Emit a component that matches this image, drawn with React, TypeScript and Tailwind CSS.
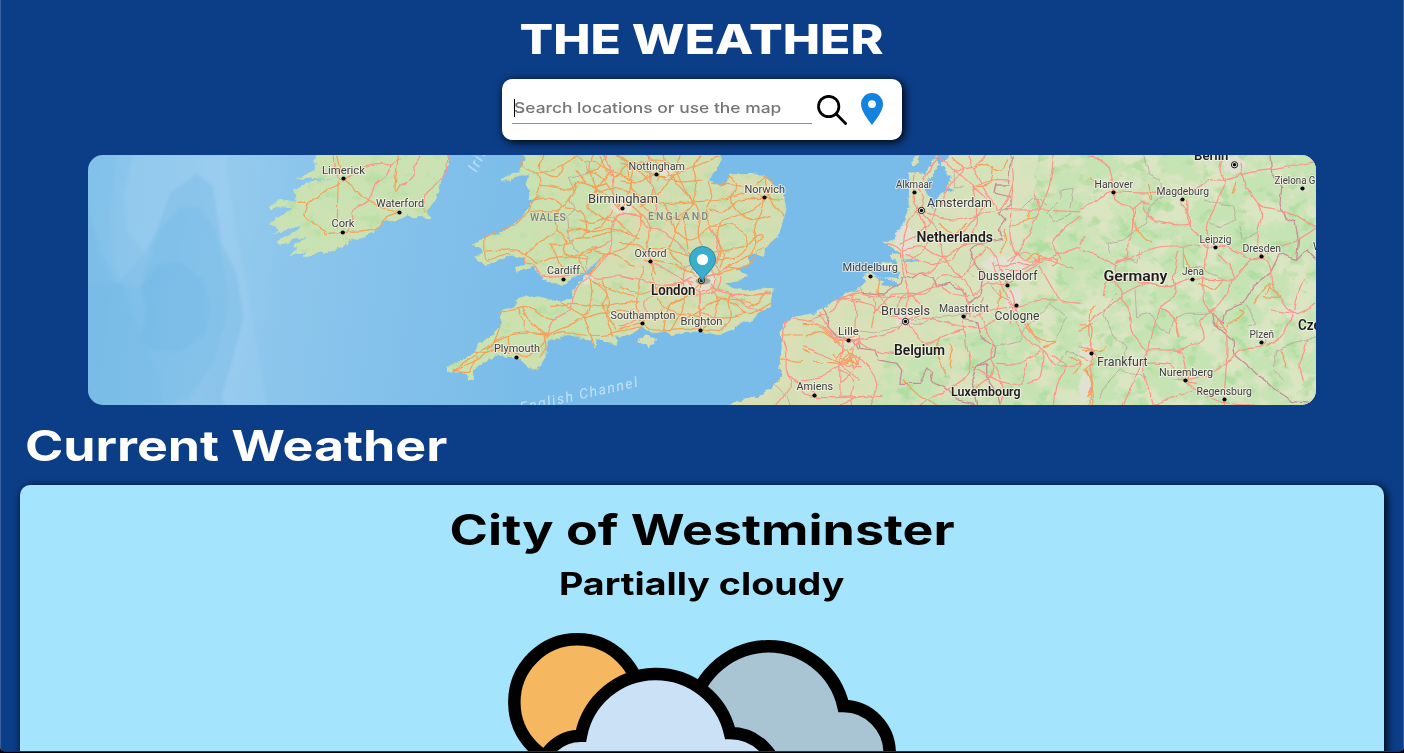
import React from 'react';

/** Map tiles are digitised at 3x; every list is local to a tile whose left edge is `ox`. */
const place = (ox: number, pts: string) =>
  pts
    .trim()
    .split(/\s+/)
    .map((p) => {
      const [x, y] = p.split(',').map(Number);
      return `${(ox + x / 3).toFixed(1)},${(150 + y / 3).toFixed(1)}`;
    })
    .join(' ');

const smooth = (ox: number, pts: string) => {
  const p = place(ox, pts).split(' ').map((s) => s.split(',').map(Number));
  let d = `M${p[0][0]},${p[0][1]}`;
  for (let i = 0; i < p.length - 1; i++) {
    const a = p[Math.max(0, i - 1)];
    const b = p[i];
    const c = p[i + 1];
    const e = p[Math.min(p.length - 1, i + 2)];
    d += `C${b[0] + (c[0] - a[0]) / 6},${b[1] + (c[1] - a[1]) / 6} ${c[0] - (e[0] - b[0]) / 6},${c[1] - (e[1] - b[1]) / 6} ${c[0]},${c[1]}`;
  }
  return d;
};

const ireland =
  place(80, '712,5 700,35 715,40 700,60 680,72 645,90 690,82 720,88 770,86 720,92 675,95 665,110 638,122 650,135 645,150 655,155 625,152 600,147 570,165 570,175 600,172 640,175 620,185 610,195 590,205 568,220 590,235 600,240 575,250 605,245 640,230 662,230 650,240 625,255 600,270 592,284 620,280 640,265 685,262 660,275 640,285 650,296 625,318 650,310 680,305 670,320 700,318 720,305 745,310 770,295 805,285 800,268 830,270 850,260 890,240 910,215 940,210 960,210 980,195') +
  ' ' +
  place(400, '40,205 60,195 85,208 95,205 80,185 105,150 118,115 130,75 145,40 145,5');

const britain =
  place(400, '350,5 375,20 362,50 355,65 330,72 305,90 330,92 350,80 385,75 380,100 390,125 385,150 405,148 380,180 350,220 315,240 290,250 255,262 217,285 245,295 250,305 225,320 255,345 290,335 330,315 370,325 375,340 345,355 350,365 380,358 400,350 420,375 430,390 455,400 490,405 520,380 555,370 575,350 600,325 570,375 535,400 520,420 515,445 480,455 455,450 420,440 385,438 350,448 350,465 335,475 305,482 300,530 270,565 235,580 225,605 200,625 138,650 138,672 185,665 200,675 205,692 220,685 215,665 240,645 265,630 290,615 320,620 350,622 385,655 415,655 435,620 440,575 470,565 505,555 550,565 578,575 585,595 590,570 620,575 650,585 650,570 640,560') +
  ' ' +
  place(620, '0,560 40,550 65,530 100,548 140,545 155,555 200,545 240,545 300,555 330,540 370,515 395,515 410,490 450,470 455,440 458,415 430,415 400,425 340,415 310,400 350,395 385,375 345,360 390,340 380,320 400,310 430,320 435,295 470,260 482,235 499,180 493,140 462,105 435,80 400,72 330,72 320,105 300,110 265,90 285,60 305,30 300,5');

const wight = place(620, '46,570 85,555 112,570 87,592 65,580');

const continent =
  place(620, '310,775 380,745 415,740 470,700 490,675 478,655 485,590 482,545 487,525 520,500 580,490 610,475 660,445') +
  ' ' +
  place(840, '0,440 60,410 80,398 70,375 95,368 120,380 180,385 175,365 120,350 130,335 175,345 150,315 185,312 130,275 160,270 190,230 205,170 210,68 235,65 255,75 265,55 300,0 720,0') +
  ' ' +
  place(1080, '740,0 740,780');

const waters = [
  place(840, '275,80 300,35 315,55 332,85 322,112 345,118 300,130 290,155 278,180 270,155 255,105'),
  place(840, '130,395 95,375 140,385 175,400 170,410 120,405'),
  place(840, '185,330 230,325 240,332 200,338'),
  place(840, '290,15 330,15 310,35 295,40'),
];

const texel = place(840, '215,48 214,35 235,12 240,30 226,48');

const east = place(400, '560,0 600,100 640,260 570,360 640,480 660,600 1200,600 1200,0');

const orange: [number, string][] = [
  [80, '655,157 680,160 672,195 700,220 735,240 740,250 790,247 850,245 890,235 920,205 960,188'],
  [80, '775,95 773,150 772,235'], [80, '680,165 710,140 745,120 790,95'], [80, '795,90 830,120 865,150 890,165 960,190'],
  [80, '770,15 780,70 760,50'], [80, '955,15 945,120 960,105'],
  [400, '255,262 258,330 300,320 330,310'], [400, '255,262 300,240 345,225 380,190 400,150 420,140'],
  [400, '258,303 350,300 375,310 420,275 470,240 465,200 480,180'], [400, '365,15 370,50 410,70 420,105 410,140 390,160'],
  [400, '410,70 460,60 500,40 530,15'], [400, '425,15 420,60 470,80 490,50'], [400, '420,105 460,110 510,120 540,95 580,110 620,100'],
  [400, '400,150 450,145 490,170 530,180 550,190 560,240 545,260'], [400, '390,180 430,185 480,180 520,130 530,100'],
  [400, '470,240 500,270 490,300 520,320 560,310 600,290'], [400, '455,285 470,320 480,345 500,375'], [400, '375,310 410,340 450,325 500,320 560,330'],
  [400, '450,285 490,285 530,265 575,262 640,240'], [400, '500,245 540,235 580,245 640,235 700,260'], [400, '350,475 370,510 380,545 440,555'],
  [400, '300,487 340,480 370,472 400,480 430,500 460,510'], [400, '365,475 390,510 420,540 440,555'], [400, '160,660 210,625 250,600 300,565 360,550 440,550'],
  [400, '165,660 230,630 280,600 350,610 380,620 420,590 440,555'], [400, '220,605 260,610 290,590 325,585'], [400, '160,655 200,665 215,650 230,620'],
  [400, '300,520 290,560 260,600'], [400, '325,560 328,610'], [400, '430,555 435,600 420,620'], [400, '440,555 490,535 550,505 600,490 700,480'],
  [400, '440,560 490,545 550,555 620,555 680,540 720,530'], [400, '455,470 520,460 600,470 650,460 720,455'], [400, '480,455 520,480 550,500 570,550 583,590'],
  [400, '570,385 575,430 565,480 550,500'], [400, '570,385 620,430 610,470 650,540'], [400, '610,390 625,450 620,500 640,560'], [400, '575,390 640,420 700,440'],
  [400, '570,370 620,310 650,315 700,350'], [400, '560,370 540,330 560,300 620,310 660,300'], [400, '580,15 570,60 590,130 560,170 600,200 640,215'],
  [400, '540,30 590,40 640,65 700,90'], [400, '560,60 600,80 640,130 660,170'], [400, '530,60 560,100 610,130 660,180'], [400, '590,130 640,115 700,130'],
  [400, '600,20 640,80 680,50 720,60'], [400, '620,20 590,60 560,70'], [400, '640,15 680,40 690,120 665,180'], [400, '540,210 580,220 620,205 680,190'],
  [400, '640,60 600,100 570,150'], [400, '640,180 600,230 560,245'], [400, '640,200 680,240 720,270'],
  [620, '0,40 60,60 130,80 200,60 270,30 300,20'], [620, '0,90 60,95 100,75 170,95 250,90'], [620, '10,20 40,60 30,110 80,150 130,160 220,155 300,150 370,130 435,80'],
  [620, '130,15 140,60 170,100 220,155 240,200 235,260 260,310'], [620, '180,15 170,60 190,110 215,150'], [620, '240,15 220,60 230,110 215,160 190,200 165,240'],
  [620, '40,120 70,170 120,200 170,205 220,160'], [620, '60,170 110,140 140,100 180,60'], [620, '0,150 50,180 90,230 80,290 90,330 110,370'], [620, '60,190 60,240 20,290 0,300'],
  [620, '265,95 275,140 260,180 275,230 330,222 370,250 380,290 345,325 290,325'], [620, '275,100 340,105 390,115 435,145 490,150'], [620, '325,75 350,105 335,150 360,190 400,210 450,200'],
  [620, '435,80 445,140 475,180 490,200'], [620, '435,145 400,180 340,200 300,215 270,235'], [620, '435,145 420,200 400,240 410,280 380,320 320,350'], [620, '435,145 460,100 430,80'],
  [620, '270,180 310,185 360,150 435,145'], [620, '270,235 300,290 290,340'], [620, '410,280 430,260 410,260 380,290'], [620, '320,350 360,355 385,345 410,310 430,290'],
  [620, '190,200 200,270 210,320 240,350'], [620, '130,160 165,240 150,300 190,350 230,380'], [620, '165,240 210,270 270,235'], [620, '80,290 150,300 200,320 270,310'],
  [620, '90,330 60,290 0,280'], [620, '100,330 150,340 200,360'], [620, '70,350 60,400 50,450 60,510'], [620, '0,410 50,430 95,420 140,410 190,400'],
  [620, '100,340 100,400 130,470 180,490 240,500'], [620, '130,540 150,470 210,430 240,400'], [620, '0,540 60,520 100,540 200,535 245,540 300,545'],
  [620, '240,540 240,430 245,390'], [620, '60,520 110,490 180,450 220,420'], [620, '245,540 280,500 290,440 270,410'], [620, '290,440 340,460 380,490 410,480 450,460'],
  [620, '300,545 330,500 325,450 350,430 400,435 450,430'], [620, '380,490 330,500 280,500 240,490'], [620, '390,470 420,450 440,420'], [620, '250,380 300,370 345,355'],
  [620, '260,310 320,300 370,290'], [620, '300,215 290,260 310,310 300,350'], [620, '150,510 200,505 260,470 310,445 400,460'], [620, '190,420 190,480 150,540'],
  [620, '0,20 50,40 110,30 160,45'], [620, '50,60 100,110 90,160'], [620, '80,15 120,50 110,90'],
  [620, '485,555 550,555'], [620, '480,620 520,635 550,635'], [620, '550,600 570,610'], [620, '580,630 610,640'], [620, '560,560 600,545 630,560 660,580'], [620, '550,520 600,530 650,570 700,560'],
  [620, '640,610 660,640 700,625'], [620, '620,640 680,640 700,600'], [620, '650,620 680,600 700,650'],
  [840, '100,440 105,480 95,530'], [840, '120,390 115,430 140,470'], [840, '330,580 335,610 330,650'], [840, '300,560 290,600 320,680'], [840, '190,690 230,730 290,765'], [840, '0,620 50,640 30,610 0,640'],
  [840, '460,50 450,100 410,110'], [840, '480,310 500,270 490,240'], [840, '300,220 340,250 380,220'], [840, '570,180 560,210'], [840, '600,320 650,330 640,350'], [840, '560,520 600,570 650,575 610,590'],
  [840, '510,230 550,215 590,200'], [840, '480,420 475,470 460,500'], [840, '690,620 720,640 700,670'], [840, '560,330 590,310 600,340'], [840, '400,60 430,40 480,60 500,30'],
  [1080, '165,170 165,220 190,265 215,275'], [1080, '440,540 410,520 430,500'], [1080, '520,460 540,430 570,400 560,430'], [1080, '570,410 600,440 550,440'], [1080, '30,590 40,540 25,500 45,460'],
  [1080, '10,600 60,605 75,590'], [1080, '0,540 40,520'], [1080, '0,620 40,640 20,660 35,700 20,740'], [1080, '15,660 30,690 40,765'], [1080, '205,100 215,150 200,130'], [1080, '290,500 295,560'],
  [1080, '600,600 620,650'], [1080, '360,400 400,420 430,390'], [1080, '440,530 490,490 480,480'], [1080, '280,690 320,690 330,660'], [1080, '470,100 460,130'], [1080, '30,80 60,110'], [1080, '310,310 330,360'],
];

const red: [number, string][] = [
  [80, '760,15 765,60 790,90 850,50 900,40 930,45 960,25'], [80, '930,45 920,75 885,105 865,150 820,180 818,210 805,245'],
  [400, '0,105 30,90 45,70 45,45 60,15'], [400, '145,15 135,75 110,100 75,135 75,185'],
  [400, '420,375 400,345 375,338 375,320'], [400, '420,378 480,380 530,370 570,375 600,385 660,378 700,390'], [400, '570,375 630,300 635,230 660,190 720,200'], [400, '570,380 540,400 520,440 510,480 460,510 440,555'],
  [400, '610,15 635,60 640,120 655,170'], [400, '575,295 600,290 635,270'],
  [620, '0,380 60,390 110,405 180,400 215,385'], [620, '0,190 50,195 80,230 140,250 190,300 215,340 230,370'], [620, '90,15 90,90 110,130 105,190'], [620, '75,330 140,360 190,390 220,400'],
  [620, '270,235 290,275 290,330 260,375'], [620, '80,490 75,455 110,430 180,415'], [620, '195,350 250,330 295,355 300,400 270,430 210,435 190,400 195,350'], [620, '210,360 250,350 280,370 280,410 240,425 205,400'],
  [620, '270,400 310,430 350,430 400,435 450,425'],
  [620, '270,410 330,430 380,470 430,480'], [620, '240,430 240,530'], [620, '0,530 50,510 80,500'], [620, '320,350 290,370 260,380'],
  [620, '500,515 485,545 500,600 500,665 540,700 570,740 720,740'], [620, '490,520 520,507 570,510 640,480 660,445 720,420'], [620, '570,510 610,530 640,560 670,570 710,575'], [620, '670,570 660,640 660,740'],
  [620, '600,490 640,560 670,600'], [620, '550,590 600,610 660,640 720,650'], [620, '540,690 600,680 660,650'], [620, '660,640 720,690'], [620, '470,765 510,710 500,665'], [620, '590,740 560,710 520,690'], [620, '660,700 700,660 720,620'], [620, '640,450 690,445 720,450'],
  [840, '0,445 50,430 100,440 200,440 290,410 330,430 390,440'], [840, '35,430 50,480 45,530 60,570 30,600'], [840, '0,450 80,460 130,490 190,510'], [840, '30,575 100,560 170,540 195,515 270,505 330,520 370,530 430,530 500,490'],
  [840, '195,515 205,430 190,370 180,300 140,280'], [840, '190,510 230,550 260,580 330,550 370,540 380,590 390,640 370,690 300,730 240,765'], [840, '100,490 150,440 200,430 250,480 200,510'], [840, '50,570 100,600 170,610 250,590'],
  [840, '0,640 40,620 75,640 110,700 90,765'], [840, '0,660 40,690 30,765'], [840, '170,500 180,450 200,430 260,430 300,380 370,380'], [840, '225,70 220,150 230,180 200,230 190,300 200,370'],
  [840, '240,180 250,140 230,110'], [840, '245,180 290,200 340,210 400,200 470,180 540,180 600,180 720,185'], [840, '245,190 300,250 310,320 380,400 400,440'], [840, '190,300 250,290 310,320 380,280 440,290 480,350 500,400'],
  [840, '230,180 260,240 250,300 210,330'], [840, '200,310 270,340 330,330 360,290'], [840, '200,370 260,370 310,320'], [840, '370,380 400,340 440,290'], [840, '180,280 240,250 280,200 290,150'],
  [840, '250,90 260,70 300,15'], [840, '300,20 340,60 400,110 410,200'], [840, '340,20 370,60 330,100 310,160'], [840, '345,60 400,50 440,15'], [840, '400,110 460,90 510,90'], [840, '380,20 400,60 440,130 470,180'], [840, '510,15 520,90 500,150 480,180'],
  [840, '300,250 360,250 410,200 400,250 360,290'], [840, '640,15 630,100 600,180 540,300 500,350'], [840, '600,180 580,120'], [840, '520,300 550,330 600,330 660,310 720,290'], [840, '470,350 530,340 580,345 600,320'], [840, '480,360 540,360 590,330'],
  [840, '660,330 640,280 680,230 720,200'], [840, '500,330 560,310 600,340 620,330 700,355'], [840, '400,440 440,400 500,400 550,370 600,340'], [840, '500,400 520,440 530,480 560,530 600,580'], [840, '440,380 470,430 520,470 510,520'],
  [840, '460,340 480,390 500,440 530,470'], [840, '600,350 640,420 660,450 720,460'], [840, '530,470 600,450 650,450'], [840, '400,500 450,480 530,470'], [840, '370,500 370,540'], [840, '430,530 460,580 450,620 470,660 490,720 480,765'], [840, '430,440 420,480 440,540'],
  [840, '520,500 560,570 610,600 650,650 720,640'], [840, '610,600 600,680 560,700'], [840, '470,640 540,640 600,600'], [840, '640,620 680,650 650,700 640,765'], [840, '560,640 540,700 470,690 400,650'], [840, '0,765 60,740 130,740'], [840, '400,720 450,680 460,640'],
  [840, '520,90 510,250 530,320'], [840, '350,400 380,440 390,500'], [840, '410,200 440,150 400,110'],
  [1080, '0,175 40,160 80,130 100,125 160,128 300,130 350,115 390,90 440,90 500,70 600,55 708,35'], [1080, '30,15 80,45 95,80 100,125 120,160 155,175 160,240 145,280 140,320 110,340 105,390 125,440 60,490 30,520 34,610 30,765'],
  [1080, '155,175 190,150 195,180 230,215 330,220 300,150'], [1080, '320,150 325,210 360,260 380,290 440,290 510,325 545,320'], [1080, '440,90 410,160 385,220 380,290 375,330 370,450 395,490 440,560 430,765'],
  [1080, '110,340 160,320 240,290 360,290'], [1080, '110,395 180,395 260,410 340,388 460,385 510,330 545,320'], [1080, '240,380 170,410 125,440 150,490 160,550 200,600'], [1080, '295,305 280,390 290,430 240,470 225,520 205,600'],
  [1080, '200,600 260,600 300,605 315,650 315,690'], [1080, '80,650 200,640 270,645 310,690 350,700'], [1080, '315,690 400,670 450,630 480,600 545,590 560,570'], [1080, '200,600 190,650 220,765'], [1080, '180,650 130,765'],
  [1080, '320,700 420,755 520,765'], [1080, '220,765 280,740 340,720'], [1080, '480,40 495,100 540,165 600,180 650,200 708,230'], [1080, '545,320 530,270 545,190 535,160'], [1080, '545,320 590,290 650,270 708,235'],
  [1080, '460,385 440,430 400,480 360,510 370,570 290,600'], [1080, '545,320 570,350 580,410 640,490 708,460'], [1080, '640,490 600,560 560,590'], [1080, '640,490 650,440 670,390'], [1080, '640,490 570,480'], [1080, '0,300 50,315 105,345'], [1080, '0,280 15,260'],
  [1080, '105,395 80,400 70,440'], [1080, '410,310 450,350 465,385'], [1080, '180,150 210,160'], [1080, '0,520 30,530'], [1080, '240,470 280,500 300,560'], [1080, '75,640 30,600 0,590'], [1080, '680,570 660,640 670,690'], [1080, '430,20 420,60 435,90'],
];

const borders: [number, string][] = [
  [400, '530,20 560,40 565,70 530,80 505,85 525,130 510,150 525,180 500,200 505,260 520,295 560,320 560,355'],
  [620, '460,700 500,735 510,765'],
  [840, '180,520 250,520 290,500 390,490'], [840, '60,540 100,545 180,530'], [840, '690,170 700,115 660,120 660,150 620,190 640,215 690,190'], [840, '400,320 380,360 400,380'], [840, '470,590 540,570 560,530 630,460 680,500 650,560'], [840, '650,650 680,600 720,620'],
  [840, '340,60 340,110 370,110'], [840, '540,180 580,140 620,165'],
  [1080, '195,15 205,70 240,90 250,140 210,170 200,220 130,270 80,280 90,310'], [1080, '370,150 400,160 460,165 470,210 420,230 390,220'], [1080, '480,230 490,270 530,250'], [1080, '310,290 310,350 360,350 390,370 440,390'],
  [1080, '130,320 170,340 180,300'], [1080, '165,420 170,500 210,490 240,540 270,550 280,510 320,490 380,490'], [1080, '110,430 70,490 100,560 140,590 130,650'], [1080, '60,745 80,700 120,660 200,680'], [1080, '590,600 580,660 610,690'], [1080, '590,600 650,580 708,560'], [1080, '500,465 530,520 500,530'],
];

const nations: [number, string][] = [
  [620, '610,475 625,500 620,530 650,560 700,570 715,600'], [840, '60,412 65,430 130,435 150,420 180,400 185,380 215,385 240,370 280,385 290,410 330,400 380,430 385,460 420,435 430,370 405,340 390,300 410,280 490,265 475,240 495,210 475,190 515,165 510,140 465,130 470,105 505,105 505,70 520,20'],
  [840, '385,460 375,510 410,515 420,560 465,590 460,620 410,650 395,690 410,765'], [840, '410,650 440,640 440,680 470,720 480,765'],
  [840, '55,570 60,595 105,600 115,630 170,640 185,660 180,700 240,700 260,655 275,665 270,690 330,720 350,750 400,760'],
  [1080, '570,15 575,70 605,110 600,160 615,205 645,215 655,270 650,330 600,310 570,370 520,410 490,460 440,480 430,520 395,490 400,520 460,570 460,610 520,660 580,715 640,755 690,760'],
  [1080, '650,330 680,300 708,330'],
];

type Label = { t: string; x: number; y: number; w: number; s?: number; b?: boolean; dot?: [number, number] };
const labels: Label[] = [
  { t: 'Limerick', x: 322, y: 173.7, w: 43, dot: [343.5, 178.5] },
  { t: 'Waterford', x: 376, y: 207, w: 48, dot: [399.5, 212.5] },
  { t: 'Cork', x: 331.5, y: 227, w: 23, dot: [342.8, 232.5] },
  { t: 'Nottingham', x: 628.5, y: 169.5, w: 56.5, dot: [656.5, 174.5] },
  { t: 'Birmingham', x: 588, y: 202.5, w: 70, s: 13.2, dot: [622.5, 208.5] },
  { t: 'Norwich', x: 744.5, y: 193, w: 40.5, dot: [764.5, 197.5] },
  { t: 'Oxford', x: 634.5, y: 257, w: 32, dot: [650.5, 261.5] },
  { t: 'Cardiff', x: 547, y: 274, w: 33, dot: [563.5, 279.5] },
  { t: 'Southampton', x: 610.5, y: 319, w: 65, dot: [642.5, 323.5] },
  { t: 'Brighton', x: 680.5, y: 325, w: 42, dot: [700.5, 330.5] },
  { t: 'Plymouth', x: 494, y: 352, w: 46, dot: [516.5, 357.5] },
  { t: 'London', x: 651, y: 294.5, w: 44.5, s: 14, b: true },
  { t: 'Lille', x: 838, y: 335, w: 21, dot: [848.5, 340.5] },
  { t: 'Amiens', x: 796.5, y: 390, w: 36.5, dot: [814.5, 395.5] },
  { t: 'Alkmaar', x: 896, y: 188, w: 36, s: 11, dot: [914.5, 192.5] },
  { t: 'Amsterdam', x: 927, y: 206.5, w: 65, s: 13 },
  { t: 'Netherlands', x: 916.5, y: 242, w: 76.5, s: 14, b: true },
  { t: 'Middelburg', x: 842.5, y: 271, w: 55.5, dot: [870.5, 276.5] },
  { t: 'Dusseldorf', x: 978, y: 280, w: 59.5, s: 13, dot: [1007.5, 285.5] },
  { t: 'Brussels', x: 881, y: 315, w: 49, s: 13 },
  { t: 'Maastricht', x: 939, y: 312, w: 50, dot: [963.5, 316.5] },
  { t: 'Cologne', x: 994.5, y: 320, w: 45, s: 13, dot: [1016.5, 305.5] },
  { t: 'Belgium', x: 894, y: 355, w: 51, s: 14, b: true },
  { t: 'Luxembourg', x: 951, y: 396, w: 69.5, s: 13.2, b: true },
  { t: 'Hanover', x: 1094.5, y: 188, w: 38.5, dot: [1113.5, 192.5] },
  { t: 'Magdeburg', x: 1156.5, y: 195, w: 52.5, dot: [1182.5, 199.5] },
  { t: 'Berlin', x: 1194, y: 160.3, w: 34.5, s: 13.5, b: true },
  { t: 'Zielona G', x: 1274.5, y: 184, w: 41, s: 11.4, dot: [1302.5, 188.5] },
  { t: 'Leipzig', x: 1199.5, y: 242.5, w: 32, dot: [1215.5, 247.5] },
  { t: 'Dresden', x: 1242.5, y: 252, w: 38.5, dot: [1261.5, 256.5] },
  { t: 'Jena', x: 1182, y: 275, w: 22, dot: [1192.5, 279.5] },
  { t: 'Germany', x: 1103.5, y: 281, w: 64, s: 15.5, b: true },
  { t: 'Plzeň', x: 1249.5, y: 337.5, w: 24.5, dot: [1261.5, 342.5] },
  { t: 'Frankfurt', x: 1097, y: 366, w: 50.5, s: 13, dot: [1091.5, 353.5] },
  { t: 'Nuremberg', x: 1159, y: 376, w: 54, dot: [1185.5, 380.5] },
  { t: 'Regensburg', x: 1196.5, y: 395, w: 55.5, dot: [1224.5, 399.5] },
  { t: 'Czechia', x: 1298, y: 329.5, w: 48, s: 14, b: true },
  { t: 'Wrocław', x: 1313, y: 250, w: 42 },
];

const capitals: [number, number][] = [[701.5, 280.5], [921.5, 210.5], [905.5, 321.5], [1234.5, 164.8]];

function WeatherMap() {
  return (
    <svg viewBox="88 155 1228 250" className="block h-full w-full" fontFamily="Roboto, 'Noto Sans', sans-serif">
      <defs>
        <linearGradient id="sea" x1="88" x2="560" y1="0" y2="60" gradientUnits="userSpaceOnUse">
          <stop offset="0" stopColor="#84c2ea" />
          <stop offset=".33" stopColor="#95caed" />
          <stop offset=".5" stopColor="#8bc5ec" />
          <stop offset="1" stopColor="#7abce9" />
        </linearGradient>
        <linearGradient id="mainland" x1="780" x2="1120" y1="0" y2="0" gradientUnits="userSpaceOnUse">
          <stop offset="0" stopColor="#dadfb5" />
          <stop offset="1" stopColor="#dae5c2" />
        </linearGradient>
        <filter id="soft" x="-5%" y="-5%" width="110%" height="110%">
          <feGaussianBlur stdDeviation="1.5" />
        </filter>
        <filter id="rough" x="-5%" y="-5%" width="110%" height="110%">
          <feTurbulence type="fractalNoise" baseFrequency=".16" numOctaves="3" seed="4" />
          <feDisplacementMap in="SourceGraphic" scale="6" xChannelSelector="R" yChannelSelector="G" />
        </filter>
        <filter id="wander" x="-5%" y="-5%" width="110%" height="110%">
          <feTurbulence type="fractalNoise" baseFrequency=".08" numOctaves="2" seed="9" />
          <feDisplacementMap in="SourceGraphic" scale="5" xChannelSelector="R" yChannelSelector="G" />
        </filter>
        <filter id="woods" x="0" y="0" width="100%" height="100%" colorInterpolationFilters="sRGB">
          <feTurbulence type="fractalNoise" baseFrequency=".06 .075" numOctaves="4" seed="21" />
          <feColorMatrix values="0 0 0 0 .65  0 0 0 0 .86  0 0 0 0 .59  6 0 0 0 -3.5" />
          <feComposite in2="SourceGraphic" operator="in" />
        </filter>
        <filter id="lightwoods" x="0" y="0" width="100%" height="100%" colorInterpolationFilters="sRGB">
          <feTurbulence type="fractalNoise" baseFrequency=".035 .04" numOctaves="4" seed="6" />
          <feColorMatrix values="0 0 0 0 .77  0 0 0 0 .89  0 0 0 0 .7  6 0 0 0 -2.4" />
          <feComposite in2="SourceGraphic" operator="in" />
        </filter>
        <clipPath id="hills">
          <path d="M870 400L890 350 985 330 1020 240 1040 150H1320V410H870Z" />
        </clipPath>
        <clipPath id="british"><polygon points={britain} /></clipPath>
      </defs>
      <rect x="88" y="155" width="1228" height="250" fill="url(#sea)" />
      <g fillOpacity=".16" filter="url(#soft)">
        <polygon fill="#b4dcf6" points={place(80, '160,15 130,130 140,240 195,308 235,230 270,130 350,70 400,110 425,280 470,370 490,500 465,600 425,740 440,765 560,765 500,400 470,250 440,60 440,15')} />
        <polygon fill="#5fafdf" points={place(80, '15,140 60,300 110,400 180,420 240,240 300,175 360,170 410,250 440,400 440,500 400,640 330,740 260,765 15,765')} />
        <polygon fill="#5fafdf" points={place(80, '180,410 230,345 300,335 370,390 390,460 380,550 300,605 215,600 180,570 200,480')} />
        <polygon fill="#5fafdf" points={place(80, '195,308 235,230 270,130 350,70 400,110 425,280 470,370 490,500 465,600 425,740 440,790 0,790 0,400 110,400')} />
        <polygon fill="#6ab5e2" points={place(80, '0,0 110,15 90,200 100,320 150,480 240,680 250,790 0,790')} />
      </g>
      <g filter="url(#rough)">
        <polygon points={ireland} fill="#cde2b3" />
        <polygon points={britain} fill="#cfe0af" />
        <polygon points={wight} fill="#d6dfb1" />
        <polygon points={continent} fill="url(#mainland)" />
        <polygon points={texel} fill="#d6dfb1" />
      </g>
      <polygon points={east} fill="#dadcb1" clipPath="url(#british)" opacity=".8" />
      <g filter="url(#lightwoods)" opacity=".45">
        <polygon points={ireland} /><polygon points={britain} />
      </g>
      <g filter="url(#lightwoods)" opacity=".25"><polygon points={continent} /></g>
      <g clipPath="url(#hills)">
        <g filter="url(#lightwoods)" opacity=".9"><polygon points={continent} /></g>
      </g>
      <g filter="url(#woods)" opacity=".4"><polygon points={britain} /><polygon points={ireland} /></g>
      <g clipPath="url(#hills)"><g filter="url(#woods)" opacity=".65"><polygon points={continent} /></g></g>
      <g fill="#e5e2d8" opacity=".8">
        {[[701, 281, 16, 10], [1007, 264, 26, 8], [1014, 300, 8, 14], [622, 206, 11, 9], [905, 321, 9, 7], [1234, 165, 11, 9], [1087, 355, 8, 10], [1085, 388, 6, 14], [905, 240, 10, 14], [849, 340, 9, 5], [1292, 313, 6, 6], [665, 170, 6, 9], [588, 279, 5, 5]].map(([x, y, rx, ry], i) => (
          <ellipse key={i} cx={x} cy={y} rx={rx} ry={ry} filter="url(#rough)" />
        ))}
      </g>
      <g fill="#7abce9" filter="url(#rough)">{waters.map((p, i) => <polygon key={i} points={p} />)}</g>
      <g fill="none" strokeLinecap="round" filter="url(#wander)">
        <g stroke="#b5a49b" strokeWidth=".9" opacity=".85">{borders.map(([o, p], i) => <polyline key={i} points={place(o, p)} />)}</g>
        <g stroke="#c78d95" strokeWidth="1.3">{nations.map(([o, p], i) => <polyline key={i} points={place(o, p)} />)}</g>
        <g stroke="#f2a057" strokeWidth="1.2">{orange.map(([o, p], i) => <path key={i} d={smooth(o, p)} />)}</g>
        <g stroke="#fa9587" strokeWidth="1.2">{red.map(([o, p], i) => <path key={i} d={smooth(o, p)} />)}</g>
      </g>
      <g fill="#85877e" fontSize="10.5" fontWeight="600" stroke="#eeeed8" strokeOpacity=".7" strokeWidth="1.2" paintOrder="stroke">
        <text x="530" y="220.5" textLength="36">WALES</text>
        <text x="648" y="220" textLength="60">ENGLAND</text>
      </g>
      <g fill="#c4e2f6" fontSize="14" fontStyle="italic">
        <text transform="translate(521 412.5) rotate(-12.5)" textLength="120">English Channel</text>
        <text transform="translate(476.5 173) rotate(-63)" letterSpacing="2">Irish Sea</text>
      </g>
      {labels.map((l) => (
        <g key={l.t}>
          <text x={l.x} y={l.y} fontSize={l.s ?? 11.8} fontWeight={l.b ? 600 : 400} textLength={l.w} lengthAdjust="spacingAndGlyphs" fill={l.b ? '#1d1d20' : '#3c3d41'} stroke="#f6f4ea" strokeOpacity=".75" strokeWidth="2.2" strokeLinejoin="round" paintOrder="stroke">{l.t}</text>
          {l.dot && <circle cx={l.dot[0]} cy={l.dot[1]} r="2.1" fill="#050505" />}
        </g>
      ))}
      {capitals.map(([x, y]) => (
        <g key={x}>
          <circle cx={x} cy={y} r="3.1" fill="#fff" stroke="#111" />
          <circle cx={x} cy={y} r="1.8" fill="#050505" />
        </g>
      ))}
      <ellipse cx="703" cy="281" rx="7.5" ry="3.5" fill="#383838" opacity=".35" />
      <path d="M702.3 281C700.5 274 689.5 268.5 689.5 259.3A13 12.8 0 0 1 715.5 259.3C715.5 268.5 704.5 274 702.3 281Z" fill="#3aaecb" stroke="#2688a5" />
      <circle cx="702.5" cy="259.5" r="5.6" fill="#fff" />
    </svg>
  );
}

function CloudIcon() {
  return (
    <svg viewBox="0 0 440 190" className="block h-[190px] w-[440px]">
      <g transform="scale(.33333)" stroke="#000" strokeWidth="37.5" strokeLinejoin="miter">
        <circle cx="292" cy="277" r="189" fill="#f6b761" />
        <path d="M635 330A236 228 0 0 1 863 108.5A231 231 0 0 1 1090 288A139 142 0 0 1 1229 430V560H635Z" fill="#a9c5d4" />
        <path d="M178 502A125 125 0 0 1 303 377A228.5 228.5 0 0 1 750 369A144 144 0 0 1 894 513V560H178Z" fill="#cae1f6" />
      </g>
    </svg>
  );
}

export default function App() {
  return (
    <div className="h-[753px] overflow-hidden bg-black font-['Inter',sans-serif]">
      <div className="flex h-[752px] flex-col overflow-hidden rounded-b-[5px] border-x border-b border-x-[#3b62a0] border-b-[#24334a] bg-[#0c3e88]">
        <h1 className="flex h-[79px] shrink-0 items-center justify-center pr-[2px] text-[41.5px] leading-none font-extrabold text-white">
          <span className="scale-x-[1.202] whitespace-nowrap">THE WEATHER</span>
        </h1>
        <div className="mx-auto flex h-[61px] w-[400px] shrink-0 items-start rounded-[10px] bg-white pt-[14px] pr-[19px] pl-[10px] shadow-[2px_2px_10px_#000]">
          <div className="flex h-[31px] w-[300px] items-center border-b border-[#7b96c4] pl-[2px]">
            <span className="h-[18px] w-px shrink-0 bg-black" />
            <span className="-ml-px origin-left scale-x-[1.2] text-[14.5px] font-medium whitespace-nowrap text-[#757575]">Search locations or use the map</span>
          </div>
          <svg viewBox="0 0 30 30" className="mt-[2px] ml-[5px] h-[30px] w-[30px] shrink-0" fill="none" stroke="#000" strokeLinecap="round">
            <circle cx="11.7" cy="11.5" r="10.2" strokeWidth="2.7" />
            <path d="M19.2 19L28.6 28.5" strokeWidth="2.8" />
          </svg>
          <svg viewBox="0 0 22 32" className="ml-[14px] h-8 w-[22px] shrink-0">
            <path fill="#1284df" fillRule="evenodd" d="M11 0A11 11 0 0 0 0 11.2C0 18 7 26.5 11 32C15 26.5 22 18 22 11.2A11 11 0 0 0 11 0ZM11 7.2A3.9 3.9 0 1 1 11 15A3.9 3.9 0 0 1 11 7.2Z" />
          </svg>
        </div>
        <div className="mx-[87px] mt-[15px] h-[250px] shrink-0 overflow-hidden rounded-[15px]">
          <WeatherMap />
        </div>
        <h2 className="flex h-20 shrink-0 items-center pt-px pl-[24px] text-[42px] leading-none font-bold text-white">
          <span className="origin-left scale-x-[1.234] whitespace-nowrap">Current Weather</span>
        </h2>
        <section className="mx-[19px] flex h-[400px] shrink-0 flex-col items-center rounded-[10px] bg-[#a4e4fd] text-black shadow-[2px_2px_10px_#000]">
          <h2 className="mt-[24px] flex h-[42px] items-center text-[42px] leading-none font-bold">
            <span className="scale-x-[1.237] whitespace-nowrap">City of Westminster</span>
          </h2>
          <h3 className="mt-[16px] flex h-8 items-center text-[31px] leading-none font-bold">
            <span className="scale-x-[1.213] whitespace-nowrap">Partially cloudy</span>
          </h3>
          <div className="mt-[11px] w-[440px] -translate-x-[2px]">
            <CloudIcon />
          </div>
        </section>
      </div>
    </div>
  );
}
